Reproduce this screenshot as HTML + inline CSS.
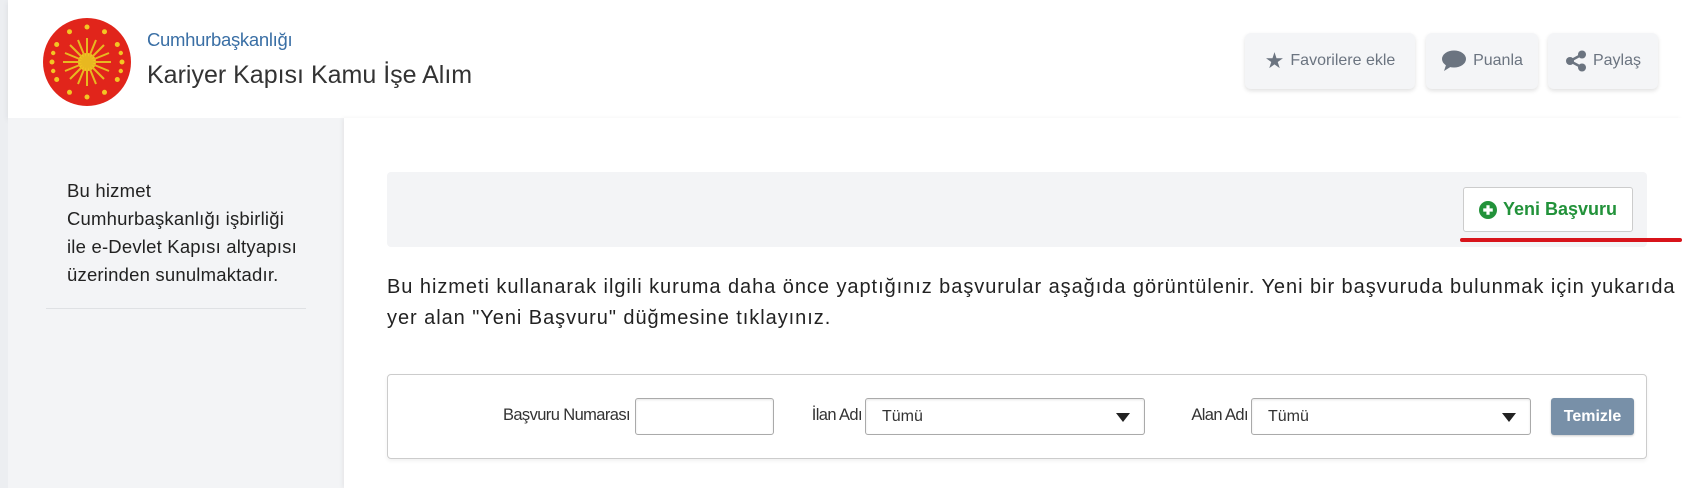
<!DOCTYPE html>
<html><head><meta charset="utf-8"><style>
*{box-sizing:border-box;margin:0;padding:0}
body{width:1682px;height:488px;overflow:hidden;background:#eceef1;font-family:"Liberation Sans","DejaVu Sans",sans-serif;position:relative}
.hdr{position:absolute;left:8px;top:0;width:1674px;height:118px;background:#fff;box-shadow:0 2px 6px rgba(0,0,0,.08)}
.side{position:absolute;left:8px;top:118px;width:336px;height:370px;background:#f3f4f6}
.main{position:absolute;left:344px;top:118px;width:1338px;height:370px;background:#fff;box-shadow:-2px 0 4px rgba(0,0,0,.05)}
.abs{position:absolute}
.hb{position:absolute;top:33px;height:56px;background:#f4f5f7;border-radius:6px;box-shadow:0 2px 4px rgba(0,0,0,.12);color:#6b7480;font-size:16px;display:flex;align-items:center;justify-content:center;gap:6px}
.lbl{position:absolute;top:406px;font-size:16.5px;color:#333;letter-spacing:-.6px;text-align:right;white-space:nowrap}
.inp{position:absolute;top:398px;height:37px;border:1px solid #aaa;border-radius:3px;background:#fff;box-shadow:inset 0 1px 2px rgba(0,0,0,.1)}
.sel{font-size:16px;color:#333;padding:9px 16px}
.arr{position:absolute;right:14px;top:14px;width:0;height:0;border-left:7px solid transparent;border-right:7px solid transparent;border-top:9px solid #222}
</style></head><body>
<div class="hdr">
<svg class="abs" style="left:35px;top:18px" width="88" height="88" viewBox="0 0 88 88">
<circle cx="44" cy="44" r="44" fill="#e1251b"/>
<g fill="#f3c623">
<circle cx="44" cy="44" r="9"/>
<g stroke="#e8b820" stroke-width="2">
<line x1="44" y1="20" x2="44" y2="68"/><line x1="20" y1="44" x2="68" y2="44"/>
<line x1="27" y1="27" x2="61" y2="61"/><line x1="61" y1="27" x2="27" y2="61"/>
<line x1="35" y1="22" x2="53" y2="66"/><line x1="53" y1="22" x2="35" y2="66"/>
<line x1="22" y1="35" x2="66" y2="53"/><line x1="22" y1="53" x2="66" y2="35"/>
</g>
<circle cx="44" cy="9" r="2.5"/><circle cx="44" cy="79" r="2.5"/><circle cx="9" cy="44" r="2.5"/><circle cx="79" cy="44" r="2.5"/>
<circle cx="61.5" cy="13.7" r="2.5"/><circle cx="26.5" cy="13.7" r="2.5"/><circle cx="61.5" cy="74.3" r="2.5"/><circle cx="26.5" cy="74.3" r="2.5"/>
<circle cx="74.3" cy="26.5" r="2.5"/><circle cx="13.7" cy="26.5" r="2.5"/><circle cx="74.3" cy="61.5" r="2.5"/><circle cx="13.7" cy="61.5" r="2.5"/>
<circle cx="77.8" cy="35" r="2.2"/><circle cx="10.2" cy="35" r="2.2"/><circle cx="77.8" cy="53" r="2.2"/><circle cx="10.2" cy="53" r="2.2"/>
</g></svg>
<div class="abs" style="left:139px;top:29px;font-size:18.5px;color:#3a6fa5;letter-spacing:-.3px">Cumhurbaşkanlığı</div>
<div class="abs" style="left:139px;top:61px;font-size:25px;color:#333">Kariyer Kapısı Kamu İşe Alım</div>
</div>
<div class="hb" style="left:1245px;width:170px"><span style="font-size:22px">★</span>Favorilere ekle</div>
<div class="hb" style="left:1426px;width:112px"><svg width="26" height="22" viewBox="0 0 26 22"><ellipse cx="13" cy="9" rx="12" ry="8.5" fill="#6b7480"/><path d="M5 15 L3 21 L11 16Z" fill="#6b7480"/></svg>Puanla</div>
<div class="hb" style="left:1548px;width:110px"><svg width="22" height="22" viewBox="0 0 22 22"><g fill="#6b7480"><circle cx="17" cy="4.5" r="4"/><circle cx="5" cy="11" r="4"/><circle cx="17" cy="17.5" r="4"/></g><path d="M17 4.5L5 11L17 17.5" stroke="#6b7480" stroke-width="2.5" fill="none"/></svg>Paylaş</div>
<div class="side">
<div class="abs" style="left:59px;top:59px;font-size:18.5px;line-height:28px;color:#222;white-space:nowrap;letter-spacing:.2px">Bu hizmet<br>Cumhurbaşkanlığı işbirliği<br>ile e-Devlet Kapısı altyapısı<br>üzerinden sunulmaktadır.</div>
<div class="abs" style="left:38px;top:190px;width:260px;height:1px;background:#dfe1e4"></div>
</div>
<div class="main"></div>
<div class="abs" style="left:387px;top:172px;width:1260px;height:75px;background:#f3f4f6;border-radius:4px"></div>
<div class="abs" style="left:1463px;top:187px;width:170px;height:45px;background:#fff;border:1px solid #ccc;border-radius:3px;color:#22923a;font-size:18px;font-weight:bold;display:flex;align-items:center;justify-content:center;gap:6px"><svg width="18" height="18" viewBox="0 0 17 17"><circle cx="8.5" cy="8.5" r="8.5" fill="#22923a"/><path d="M8.5 4v9M4 8.5h9" stroke="#fff" stroke-width="3"/></svg>Yeni Başvuru</div>
<div class="abs" style="left:1460px;top:238px;width:222px;height:4px;background:#d8141b;border-radius:2px"></div>
<div class="abs" style="left:387px;top:272px;font-size:20px;line-height:31px;color:#222;white-space:nowrap;letter-spacing:.95px">Bu hizmeti kullanarak ilgili kuruma daha önce yaptığınız başvurular aşağıda görüntülenir. Yeni bir başvuruda bulunmak için yukarıda<br>yer alan "Yeni Başvuru" düğmesine tıklayınız.</div>
<div class="abs" style="left:387px;top:374px;width:1260px;height:85px;border:1px solid #ccc;border-radius:4px;background:#fff;box-shadow:0 2px 4px rgba(0,0,0,.06)"></div>
<div class="lbl" style="right:1052px">Başvuru Numarası</div>
<div class="inp" style="left:635px;width:139px"></div>
<div class="lbl" style="right:820px">İlan Adı</div>
<div class="inp sel" style="left:865px;width:280px">Tümü<div class="arr"></div></div>
<div class="lbl" style="right:434px">Alan Adı</div>
<div class="inp sel" style="left:1251px;width:280px">Tümü<div class="arr"></div></div>
<div class="abs" style="left:1551px;top:398px;width:83px;height:37px;background:#7890a8;border-radius:3px;color:#fff;font-weight:bold;font-size:16px;display:flex;align-items:center;justify-content:center;box-shadow:0 1px 2px rgba(0,0,0,.2)">Temizle</div>
</body></html>
